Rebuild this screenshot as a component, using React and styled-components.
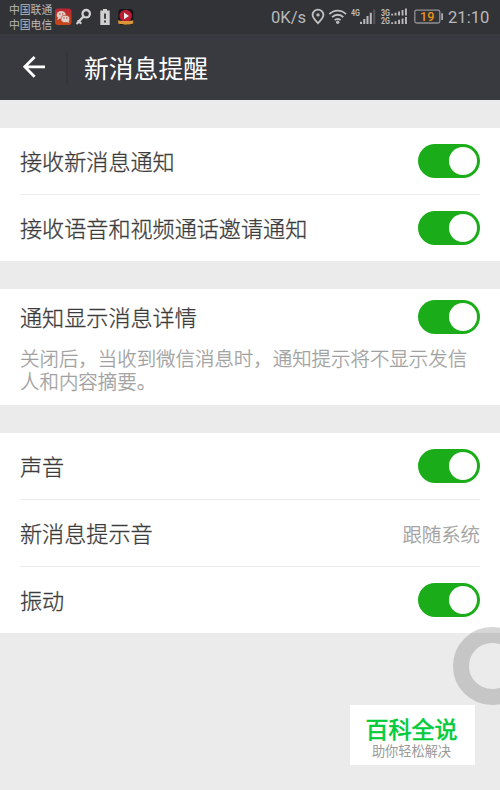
import { useState } from 'react';
import styled, { createGlobalStyle } from 'styled-components';

const GlobalStyle = createGlobalStyle`
  * {
    box-sizing: border-box;
  }

  body {
    margin: 0;
    overflow: hidden;
    background-color: #ebebeb;
    font-family: 'Noto Sans CJK SC', sans-serif;
  }
`;

const StyledScreen = styled.div`
  position: relative;
  width: 500px;
  height: 790px;
  overflow: hidden;
  background-color: #ebebeb;
`;

const StyledStatusBar = styled.div`
  height: 34px;
  padding: 0 11px 0 9px;
  display: flex;
  justify-content: space-between;
  background-color: #323337;
  color: #b9b9bb;
`;

const StyledCarriers = styled.div`
  width: 46px;
  padding-top: 2px;
  font-size: 10.8px;
  line-height: 15.3px;
  white-space: nowrap;
`;

const StyledStatusGroup = styled.div`
  display: flex;
  align-items: flex-start;
`;

const StyledStatusText = styled.span`
  width: ${({ $width }) => $width}px;
  padding-top: 7px;
  font-family: Roboto, sans-serif;
  font-size: 16.6px;
  line-height: 21px;
  white-space: nowrap;
`;

const StyledStatusIcons = styled.svg`
  display: block;
`;

const StyledHeader = styled.header`
  height: 66px;
  padding-left: 22px;
  display: flex;
  align-items: center;
  background-color: #393a3f;
`;

const StyledBackButton = styled.button`
  width: 46px;
  height: 33px;
  padding: 0;
  display: flex;
  align-items: center;
  border: 0;
  border-right: 2px solid #343539;
  background: none;
  cursor: pointer;
`;

const StyledTitle = styled.h1`
  margin: 0 0 0 16px;
  color: #fff;
  font-size: 24.8px;
  font-weight: 400;
  line-height: 34px;
`;

const StyledContent = styled.main`
  padding-top: 27.7px;
  display: flex;
  flex-direction: column;
  gap: 28px;
`;

const StyledSection = styled.section`
  padding: 0 20px;
  background-color: #fff;
`;

const StyledRow = styled.div`
  height: ${({ $height = 66.6 }) => $height}px;
  display: flex;
  align-items: center;
  justify-content: space-between;

  & + & {
    border-top: 1px solid #ebebeb;
  }
`;

const StyledLabel = styled.span`
  padding-bottom: 2px;
  color: #3c3c3c;
  font-size: 22.1px;
  font-weight: 300;
  line-height: 30px;
  -webkit-text-stroke: 0.3px #3c3c3c;
`;

const StyledValue = styled.span`
  padding-top: 1px;
  color: #a0a0a0;
  font-size: 19.4px;
  font-weight: 300;
  line-height: 28px;
  -webkit-text-stroke: 0.3px #a0a0a0;
`;

const StyledDescription = styled.p`
  width: 450px;
  height: 60px;
  margin: 0;
  padding-top: 2.6px;
  color: #a0a0a0;
  font-size: 19.45px;
  font-weight: 300;
  line-height: 22.6px;
  -webkit-text-stroke: 0.3px #a0a0a0;
`;

const StyledSwitch = styled.button`
  width: 62.5px;
  height: 33.5px;
  padding: 3px;
  display: flex;
  justify-content: ${({ $on }) => ($on ? 'flex-end' : 'flex-start')};
  align-items: center;
  border: 0;
  border-radius: 17px;
  background-color: ${({ $on }) => ($on ? '#1aad19' : '#c8c8c8')};
  cursor: pointer;
`;

const StyledKnob = styled.span`
  width: 28px;
  height: 28px;
  border-radius: 50%;
  background-color: #fff;
`;

const StyledFloatingBall = styled.div`
  position: absolute;
  top: 627px;
  left: 452.5px;
  width: 78px;
  height: 78px;
  border: 16.5px solid rgba(60, 60, 60, 0.21);
  border-radius: 50%;
`;

const StyledBadge = styled.div`
  position: absolute;
  top: 705px;
  left: 350px;
  width: 125px;
  height: 60px;
  padding-top: 9px;
  display: flex;
  flex-direction: column;
  align-items: center;
  background-color: #fff;
  white-space: nowrap;
`;

const StyledBadgeTitle = styled.strong`
  padding-right: 2px;
  color: #00cb38;
  font-size: 23px;
  font-weight: 400;
  line-height: 29px;
  -webkit-text-stroke: 0.6px #00cb38;
`;

const StyledBadgeText = styled.span`
  padding-right: 2px;
  color: #999;
  font-size: 13.2px;
  line-height: 15px;
`;

const NotificationIcons = () => (
  <StyledStatusIcons width='84' height='34' viewBox='0 0 84 34'>
    <defs>
      <linearGradient id='chat' x1='0' y1='0' x2='0' y2='1'>
        <stop offset='0' stopColor='#b92334' />
        <stop offset='1' stopColor='#c64914' />
      </linearGradient>
    </defs>
    <rect x='0' y='8.5' width='16.5' height='16.5' rx='3' fill='url(#chat)' />
    <ellipse cx='6.2' cy='15' rx='4.5' ry='3.9' fill='#ddd0c8' />
    <path d='M3 17.5 2.4 20l3-1.4z' fill='#ddd0c8' />
    <ellipse cx='10.3' cy='19' rx='4.4' ry='3.7' fill='#ddd0c8' stroke='#bf382a' strokeWidth='.7' />
    <path d='m11.7 21.8 2.2 1.3-.2-2.7z' fill='#ddd0c8' />
    <g fill='#b9352a'>
      <circle cx='4.8' cy='13.9' r='.7' />
      <circle cx='7.7' cy='13.9' r='.7' />
      <circle cx='9' cy='18' r='.65' />
      <circle cx='11.8' cy='18' r='.65' />
    </g>
    <g fill='none' stroke='#d0d0d1' strokeWidth='2.3'>
      <circle cx='31.2' cy='13.7' r='3.7' />
      <path d='m28.6 16.4-6.3 6.9M23.4 21l2.2 2' strokeLinecap='round' />
    </g>
    <path d='M48 9h4v1.6h2.7V25h-9.4V10.6H48z' fill='#d0d0d1' />
    <path d='M50 13.5v5.2M50 20.4v2' stroke='#323337' strokeWidth='1.8' />
    <rect x='63.3' y='9' width='15' height='16' rx='4' fill='#141318' />
    <circle cx='70.7' cy='16' r='6.2' fill='#ba1e32' />
    <path d='m69 12.5 5 3.4-5 3.3z' fill='#eee' />
    <path d='M63.2 20.2c5 1.2 10 1.2 15 0v3.4c-4 1.6-11 1.6-15 0z' fill='#db9638' />
  </StyledStatusIcons>
);

const SignalIcons = () => (
  <StyledStatusIcons width='137' height='34' viewBox='311 0 137 34' fill='#b9b9bb'>
    <g fill='none' stroke='#c3c3c5' strokeWidth='1.8'>
      <path d='M318 23.2c-2.3-2.5-5.4-5.3-5.4-8.2a5.4 5.4 0 0 1 10.8 0c0 2.9-3.1 5.7-5.4 8.2z' />
      <path d='M329.4 14.2c4.6-4.8 12-4.8 16.6 0M332.1 17.2c3.1-3.3 8.1-3.3 11.2 0M334.8 20.1c1.6-1.7 4.2-1.7 5.8 0' />
    </g>
    <circle cx='318' cy='14.9' r='1.7' />
    <circle cx='337.7' cy='22.2' r='1.7' />
    <g fontFamily='Roboto, sans-serif' fontWeight='700' fontSize='9.5'>
      <text x='351' y='15.6' textLength='9' lengthAdjust='spacingAndGlyphs'>4G</text>
      <text x='381' y='15.8' textLength='9' lengthAdjust='spacingAndGlyphs'>3G</text>
      <text x='381' y='24.2' textLength='9' lengthAdjust='spacingAndGlyphs'>2G</text>
    </g>
    <path d='M360 21.8h2V24h-2zM363.3 19.1h2V24h-2zM366.5 16h2v8h-2zM369.8 12.8h2V24h-2z' />
    <path d='M373.2 9.5h2V24h-2z' fill='#55565a' />
    <path d='M391.2 13.8h1.9v1.8h-1.9zM394.6 12.8h1.9v2.8h-1.9zM398.1 11.4h1.9v4.2h-1.9zM401.6 10h1.9v5.6h-1.9zM405 8.5h1.9v7.1H405zM391.2 22.2h1.9V24h-1.9zM394.6 21.2h1.9V24h-1.9zM398.1 19.8h1.9V24h-1.9zM401.6 18.4h1.9V24h-1.9zM405 16.9h1.9V24H405z' />
    <rect x='414.8' y='10.2' width='25' height='12.8' rx='1.8' fill='none' stroke='#919194' strokeWidth='1.3' />
    <path d='M441.3 13.2h1.6v6.8h-1.6z' />
    <text x='427.2' y='21.1' textAnchor='middle' fontFamily='Roboto, sans-serif' fontSize='12.6' fontWeight='500' fill='#e99119'>19</text>
  </StyledStatusIcons>
);

const Switch = ({ label }) => {
  const [isOn, setIsOn] = useState(true);
  return (
    <StyledSwitch
      type='button'
      role='switch'
      aria-checked={isOn}
      aria-label={label}
      $on={isOn}
      onClick={() => setIsOn((prevState) => !prevState)}
    >
      <StyledKnob />
    </StyledSwitch>
  );
};

const SettingRow = ({ label, value, height }) => (
  <StyledRow $height={height}>
    <StyledLabel>{label}</StyledLabel>
    {value ? <StyledValue>{value}</StyledValue> : <Switch label={label} />}
  </StyledRow>
);

const App = () => (
  <>
    <GlobalStyle />
    <StyledScreen>
      <StyledStatusBar>
        <StyledStatusGroup>
          <StyledCarriers>
            <div>中国联通</div>
            <div>中国电信</div>
          </StyledCarriers>
          <NotificationIcons />
        </StyledStatusGroup>
        <StyledStatusGroup>
          <StyledStatusText $width={40}>0K/s</StyledStatusText>
          <SignalIcons />
          <StyledStatusText $width={41}>21:10</StyledStatusText>
        </StyledStatusGroup>
      </StyledStatusBar>
      <StyledHeader>
        <StyledBackButton type='button' aria-label='返回'>
          <svg width='24' height='24' viewBox='0 0 24 24' fill='none' stroke='#fff' strokeWidth='2.8'>
            <path d='M12.6 1.9 2.8 11.8l9.8 9.9M2.8 11.8H23' />
          </svg>
        </StyledBackButton>
        <StyledTitle>新消息提醒</StyledTitle>
      </StyledHeader>
      <StyledContent>
        <StyledSection>
          <SettingRow label='接收新消息通知' />
          <SettingRow label='接收语音和视频通话邀请通知' />
        </StyledSection>
        <StyledSection>
          <SettingRow label='通知显示消息详情' height={56} />
          <StyledDescription>
            关闭后，当收到微信消息时，通知提示将不显示发信人和内容摘要。
          </StyledDescription>
        </StyledSection>
        <StyledSection>
          <SettingRow label='声音' />
          <SettingRow label='新消息提示音' value='跟随系统' />
          <SettingRow label='振动' />
        </StyledSection>
      </StyledContent>
      <StyledFloatingBall />
      <StyledBadge>
        <StyledBadgeTitle>百科全说</StyledBadgeTitle>
        <StyledBadgeText>助你轻松解决</StyledBadgeText>
      </StyledBadge>
    </StyledScreen>
  </>
);

export default App;
